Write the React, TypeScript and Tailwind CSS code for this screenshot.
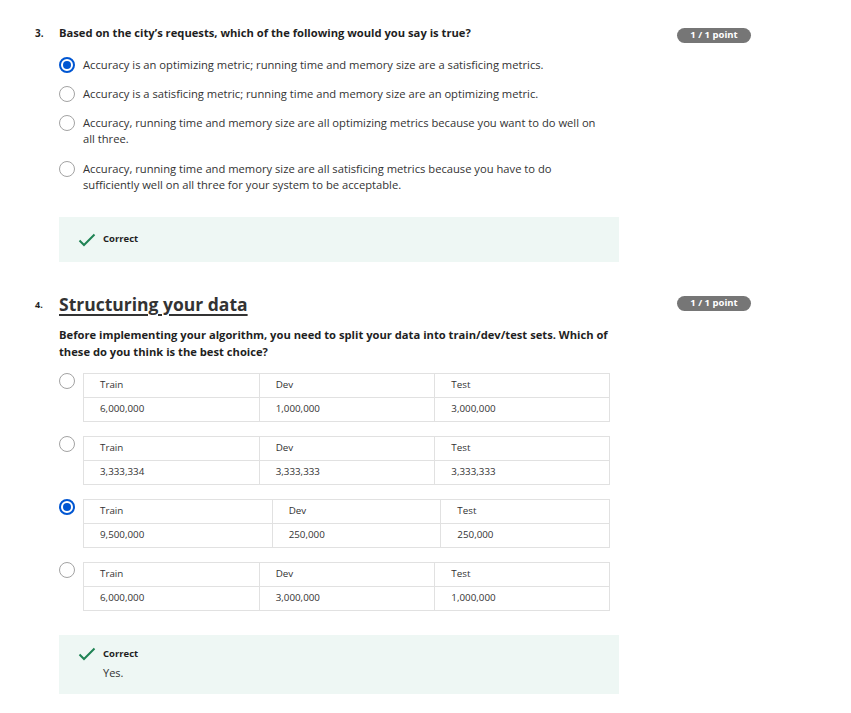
import React from 'react'

const font = { fontFamily: '"Open Sans", "Liberation Sans", sans-serif' }

const Radio = ({ checked = false }: { checked?: boolean }) =>
  checked ? (
    <span className="flex h-[16px] w-[16px] shrink-0 items-center justify-center rounded-full border-[2px] border-[#0056d2]">
      <span className="h-[8px] w-[8px] rounded-full bg-[#0056d2]" />
    </span>
  ) : (
    <span className="h-[16px] w-[16px] shrink-0 rounded-full border border-[#a3a3a3]" />
  )

const Badge = () => (
  <div className="ml-[58px] mt-[3px] flex h-[15px] w-[74px] shrink-0 items-center justify-center rounded-full bg-[#767676] text-[9.5px] font-bold text-white">
    1 / 1 point
  </div>
)

const Check = () => (
  <svg width="18" height="14" viewBox="0 0 18 14" className="shrink-0">
    <polyline points="1.5,7.5 6,12 16.5,1.5" fill="none" stroke="#1f8354" strokeWidth="2" />
  </svg>
)

const options3 = [
  { text: 'Accuracy is an optimizing metric; running time and memory size are a satisficing metrics.', checked: true },
  { text: 'Accuracy is a satisficing metric; running time and memory size are an optimizing metric.' },
  { text: 'Accuracy, running time and memory size are all optimizing metrics because you want to do well on all three.' },
  {
    text: 'Accuracy, running time and memory size are all satisficing metrics because you have to do sufficiently well on all three for your system to be acceptable.',
  },
]

const splits = [
  { vals: ['6,000,000', '1,000,000', '3,000,000'], cols: ['w-[176px]', 'w-[176px]', 'w-[175px]'] },
  { vals: ['3,333,334', '3,333,333', '3,333,333'], cols: ['w-[176px]', 'w-[176px]', 'w-[175px]'] },
  { vals: ['9,500,000', '250,000', '250,000'], cols: ['w-[189px]', 'w-[169px]', 'w-[169px]'], checked: true },
  { vals: ['6,000,000', '3,000,000', '1,000,000'], cols: ['w-[176px]', 'w-[176px]', 'w-[175px]'] },
]

const SplitTable = ({ vals, cols }: { vals: string[]; cols: string[] }) => (
  <div className="w-[527px] border-l border-t border-[#e1e1e1] text-[9.8px] text-[#333]">
    {[['Train', 'Dev', 'Test'], vals].map((row, i) => (
      <div key={i} className="flex h-[24px]">
        {row.map((cell, j) => (
          <div key={j} className={`${cols[j]} flex items-center border-b border-r border-[#e1e1e1] pl-[16px]`}>
            {cell}
          </div>
        ))}
      </div>
    ))}
  </div>
)

export default function App() {
  return (
    <div className="min-h-[713px] w-[851px] bg-white pl-[35px] pt-[25px] text-[#1f1f1f]" style={font}>
      {/* question 3 */}
      <div className="flex">
        <div className="w-[24px] shrink-0 text-[10px] font-bold leading-[16px]">3.</div>
        <div className="w-[560px] shrink-0">
          <div className="text-[11.2px] font-bold leading-[16px]">
            Based on the city’s requests, which of the following would you say is true?
          </div>
          <div className="mt-[16px] flex flex-col gap-[13px]">
            {options3.map((o, i) => (
              <div key={i} className={`flex items-start ${i === 3 ? 'mt-[1px]' : ''}`}>
                <Radio checked={o.checked} />
                <div className="ml-[8px] w-[520px] text-[11.2px] leading-[16px] text-[#333]">{o.text}</div>
              </div>
            ))}
          </div>
          <div className="mt-[24px] flex h-[45px] items-center gap-[7px] bg-[#eef7f4] pl-[19px]">
            <Check />
            <span className="text-[9.5px] font-bold">Correct</span>
          </div>
        </div>
        <Badge />
      </div>

      {/* question 4 */}
      <div className="mt-[30px] flex">
        <div className="w-[24px] shrink-0 pt-[5px] text-[9px] font-bold leading-[16px]">4.</div>
        <div className="w-[560px] shrink-0">
          <div className="text-[17.5px] font-bold leading-[24px] text-[#333] underline decoration-[1.5px] underline-offset-[3px]">
            Structuring your data
          </div>
          <div className="mt-[10px] w-[560px] text-[11.2px] font-bold leading-[17px]">
            Before implementing your algorithm, you need to split your data into train/dev/test sets. Which of these do
            you think is the best choice?
          </div>
          <div className="mt-[13px] flex flex-col gap-[14px]">
            {splits.map((s, i) => (
              <div key={i} className="flex items-start">
                <Radio checked={s.checked} />
                <div className="ml-[8px]">
                  <SplitTable vals={s.vals} cols={s.cols} />
                </div>
              </div>
            ))}
          </div>
          <div className="mt-[24px] flex h-[59px] flex-col justify-center bg-[#eef7f4] pl-[19px]">
            <div className="flex items-center gap-[7px]">
              <Check />
              <span className="text-[9.5px] font-bold">Correct</span>
            </div>
            <div className="ml-[25px] mt-[4px] text-[11px] text-[#333]">Yes.</div>
          </div>
        </div>
        <div className="mt-[1px]">
          <Badge />
        </div>
      </div>
    </div>
  )
}
